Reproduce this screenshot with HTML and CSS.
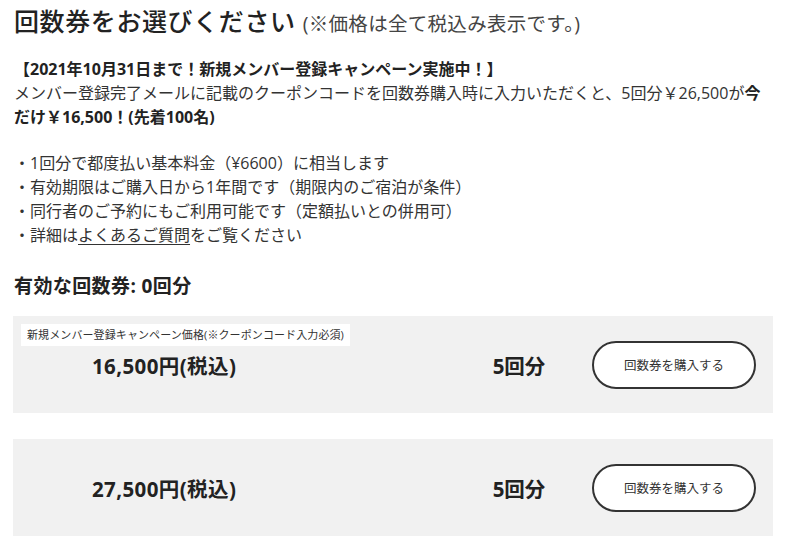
FILE: index.html
```html
<!DOCTYPE html>
<html lang="ja">
<head>
<meta charset="utf-8">
<title>回数券をお選びください</title>
<link rel="stylesheet" href="styles.css">
</head>
<body>
<main class="page">
  <h1 class="title">回数券をお選びください <span class="title-note">(※価格は全て税込み表示です。)</span></h1>

  <div class="intro">
    <p class="campaign"><strong>【2021年10月31日まで！新規メンバー登録キャンペーン実施中！】</strong><br>メンバー登録完了メールに記載のクーポンコードを回数券購入時に入力いただくと、5回分￥26,500が<strong>今だけ￥16,500！(先着100名)</strong></p>
    <ul class="notes">
      <li>・1回分で都度払い基本料金（¥6600）に相当します</li>
      <li>・有効期限はご購入日から1年間です（期限内のご宿泊が条件）</li>
      <li>・同行者のご予約にもご利用可能です（定額払いとの併用可）</li>
      <li>・詳細は<a class="link" href="#">よくあるご質問</a>をご覧ください</li>
    </ul>
  </div>

  <h2 class="valid">有効な回数券: 0回分</h2>

  <section class="card">
    <span class="badge">新規メンバー登録キャンペーン価格(※クーポンコード入力必須)</span>
    <div class="price">16,500円(税込)</div>
    <div class="count">5回分</div>
    <button class="buy">回数券を購入する</button>
  </section>

  <section class="card">
    <div class="price">27,500円(税込)</div>
    <div class="count">5回分</div>
    <button class="buy">回数券を購入する</button>
  </section>
</main>
</body>
</html>
```

FILE: styles.css
```css
* { box-sizing: border-box; }
html, body { margin: 0; padding: 0; background: #fff; }
body {
  font-family: "Open Sans", "Noto Sans CJK JP", sans-serif;
  color: #333;
}
.page {
  padding: 4px 12px 0 13px;
}
.title {
  margin: 0 0 0 1px;
  font-size: 25px;
  line-height: 34px;
  font-weight: 500;
  color: #222;
  letter-spacing: 0.6px;
}
.title-note {
  font-size: 19.5px;
  font-weight: 400;
  color: #444;
  letter-spacing: 0.3px;
}
.intro {
  margin-top: 16px;
  font-size: 16px;
  line-height: 24px;
  padding-left: 1px;
}
.campaign { margin: 0 0 22px; }
.campaign strong { font-weight: 700; color: #222; }
.notes {
  list-style: none;
  margin: 0;
  padding: 0;
}
.link {
  color: #333;
  text-decoration: underline;
  text-underline-offset: 3px;
}
.valid {
  margin: 26px 0 17px 1px;
  font-size: 19px;
  line-height: 26px;
  font-weight: 700;
  color: #222;
  letter-spacing: 0.4px;
}
.card {
  position: relative;
  display: flex;
  align-items: center;
  height: 97px;
  width: 760px;
  background: #f1f1f1;
  padding: 0 17px 0 79px;
  margin-bottom: 26px;
}
.badge {
  position: absolute;
  left: 8px;
  top: 8px;
  background: #fff;
  font-size: 11px;
  line-height: 22px;
  padding: 0 6px;
  color: #333;
  letter-spacing: 0.1px;
}
.price {
  font-size: 20.5px;
  font-weight: 700;
  color: #222;
  flex: 1;
  letter-spacing: 0.4px;
}
.count {
  font-size: 20.5px;
  font-weight: 700;
  color: #222;
  width: 90px;
  text-align: center;
  margin-right: 28px;
}
.buy {
  width: 164px;
  height: 48px;
  border: 2px solid #333;
  border-radius: 24px;
  background: #fff;
  font-family: "Noto Sans CJK JP", sans-serif;
  font-size: 12.5px;
  color: #333;
  cursor: pointer;
}
```
